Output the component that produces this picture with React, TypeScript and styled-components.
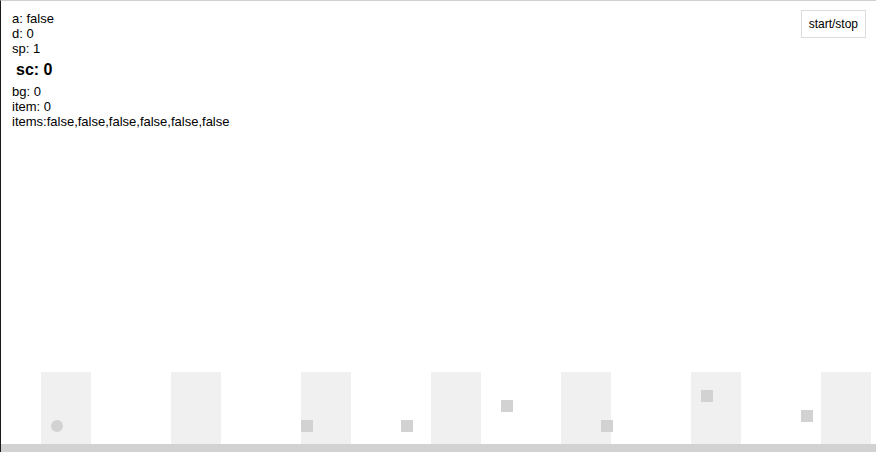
import React from "react";
import styled, { createGlobalStyle } from "styled-components";

const Global = createGlobalStyle`
  html, body { margin: 0; padding: 0; background: #fff; }
  body { font-family: "Liberation Sans", Helvetica, Arial, sans-serif; color: #000; }
  #root { width: 876px; height: 452px; }
`;

const Stage = styled.div`
  box-sizing: border-box;
  width: 876px;
  height: 452px;
  border-top: 1px solid #cfcfcf;
  border-left: 1px solid #1a1a1a;
  display: flex;
  flex-direction: column;
  overflow: hidden;
`;

const Header = styled.div`
  display: flex;
  justify-content: space-between;
  align-items: flex-start;
  padding: 10px 10px 0 11px;
`;

const Info = styled.div`
  display: flex;
  flex-direction: column;
  font-size: 13px;
  line-height: 15px;
`;

const Line = styled.div`
  white-space: nowrap;
`;

const Score = styled.div`
  font-size: 16px;
  font-weight: bold;
  line-height: 28px;
  padding-left: 4px;
`;

const Button = styled.button`
  box-sizing: border-box;
  height: 28px;
  padding: 0 7px;
  margin-top: -1px;
  background: #fff;
  border: 1px solid #dcdcdc;
  border-radius: 0;
  font-family: "Liberation Sans", Helvetica, Arial, sans-serif;
  font-size: 12px;
  color: #000;
`;

const Spacer = styled.div`
  flex: 1;
`;

const Track = styled.div`
  position: relative;
  height: 72px;
  display: flex;
  gap: 80px;
  padding-left: 40px;
`;

const Pillar = styled.div`
  width: 50px;
  height: 72px;
  flex-shrink: 0;
  background: #f0f0f0;
`;

const Item = styled.div<{ $round?: boolean }>`
  position: absolute;
  width: 12px;
  height: 12px;
  background: #d2d2d2;
  border-radius: ${(p) => (p.$round ? "50%" : "0")};
`;

const Floor = styled.div`
  height: 8px;
  background: #d2d2d2;
`;

const items = [
  { x: 300, y: 48 },
  { x: 400, y: 48 },
  { x: 500, y: 28 },
  { x: 600, y: 48 },
  { x: 700, y: 18 },
  { x: 800, y: 38 },
];

export default function App() {
  return (
    <>
      <Global />
      <Stage>
        <Header>
          <Info>
            <Line>a: false</Line>
            <Line>d: 0</Line>
            <Line>sp: 1</Line>
            <Score>sc: 0</Score>
            <Line>bg: 0</Line>
            <Line>item: 0</Line>
            <Line>items:false,false,false,false,false,false</Line>
          </Info>
          <Button>start/stop</Button>
        </Header>
        <Spacer />
        <Track>
          {Array.from({ length: 7 }).map((_, i) => (
            <Pillar key={i} />
          ))}
          <Item $round style={{ left: 50, top: 48 }} />
          {items.map((it, i) => (
            <Item key={i} style={{ left: it.x, top: it.y }} />
          ))}
        </Track>
        <Floor />
      </Stage>
    </>
  );
}
